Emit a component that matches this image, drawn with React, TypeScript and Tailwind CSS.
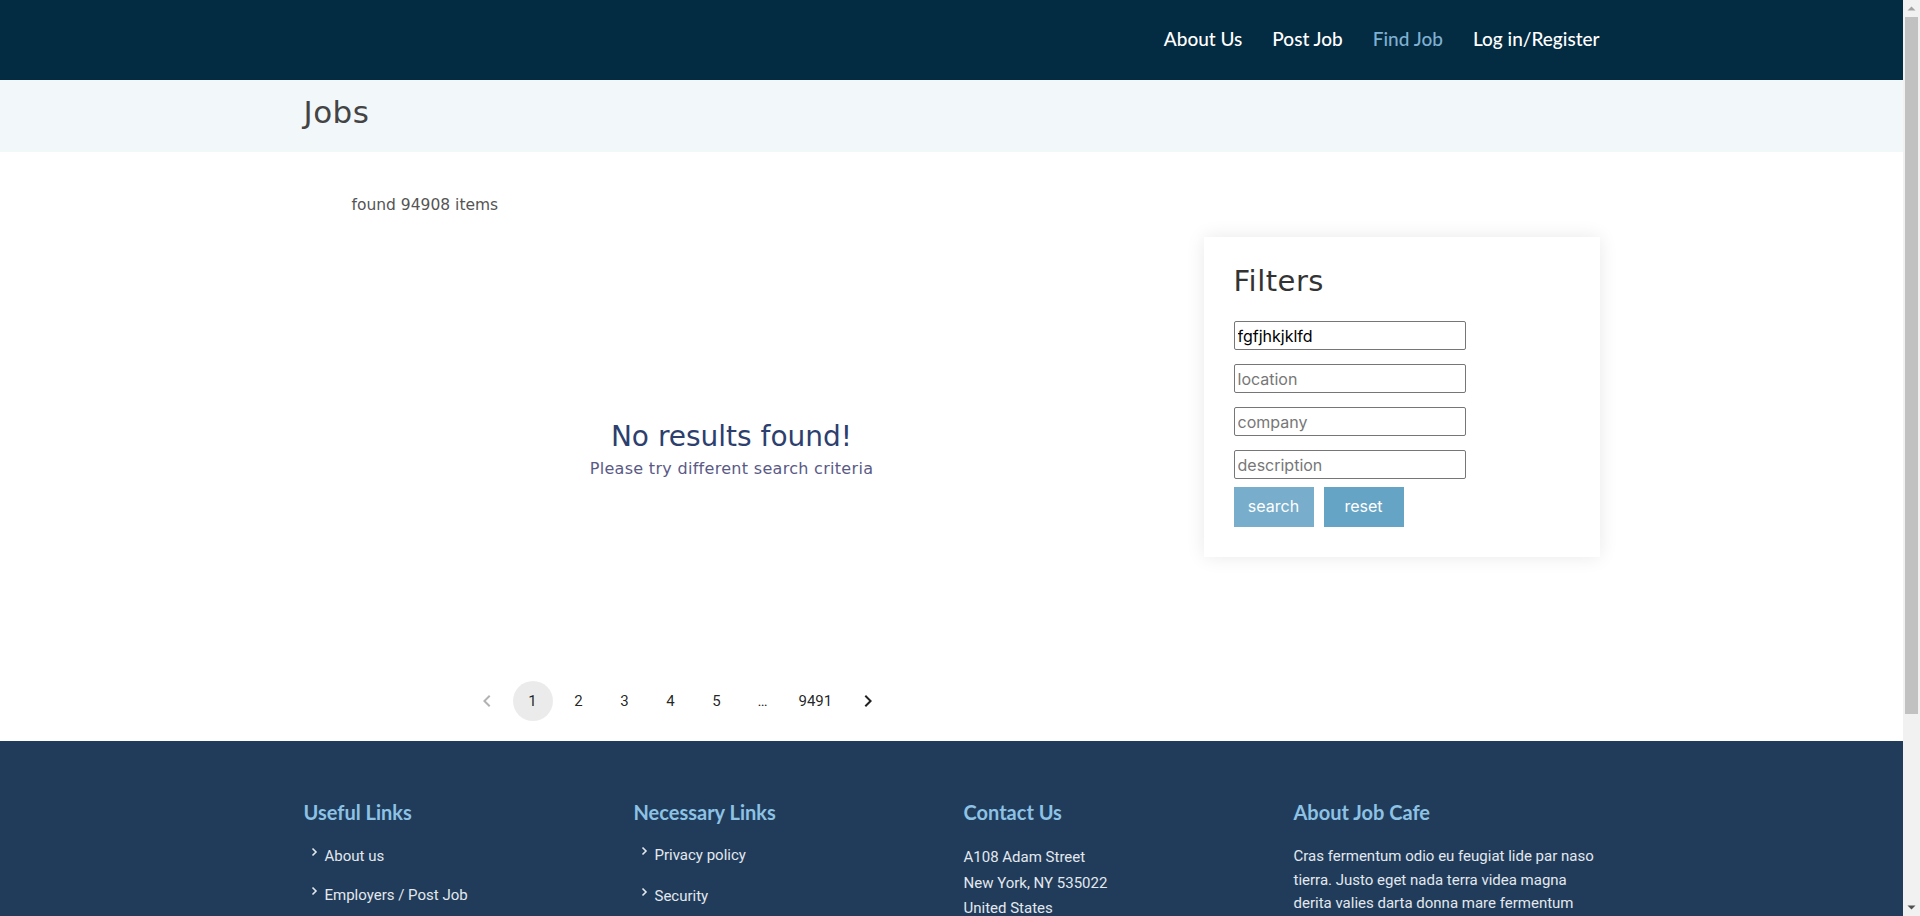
import React from "react";

const Chevron = () => (
  <svg width="7" height="10" viewBox="0 0 7 10" className="mr-[7px] -mt-[8px] shrink-0" fill="none">
    <path d="M1.5 1.5 L5 5 L1.5 8.5" stroke="#e3e8ee" strokeWidth="1.6" />
  </svg>
);

const PrevIcon = ({ color }: { color: string }) => (
  <svg width="24" height="24" viewBox="0 0 24 24">
    <path d="M15.41 7.41 14 6l-6 6 6 6 1.41-1.41L10.83 12z" fill={color} />
  </svg>
);
const NextIcon = ({ color }: { color: string }) => (
  <svg width="24" height="24" viewBox="0 0 24 24">
    <path d="M10 6 8.59 7.41 13.17 12l-4.58 4.59L10 18l6-6z" fill={color} />
  </svg>
);

const Scrollbar = () => (
  <div className="flex h-[916px] w-[17px] shrink-0 flex-col bg-[#f1f1f1]">
    <div className="flex h-[17px] items-center justify-center">
      <svg width="9" height="5" viewBox="0 0 9 5">
        <path d="M0.5 4.5 L4.5 0.5 L8.5 4.5 Z" fill="#a3a3a3" />
      </svg>
    </div>
    <div className="mx-[2px] h-[697px] bg-[#c1c1c1]" />
    <div className="flex-1" />
    <div className="flex h-[17px] items-center justify-center">
      <svg width="9" height="5" viewBox="0 0 9 5">
        <path d="M0.5 0.5 L4.5 4.5 L8.5 0.5 Z" fill="#505050" />
      </svg>
    </div>
  </div>
);

export default function App() {
  const rounded = { fontFamily: '"DejaVu Sans", sans-serif' };
  const nav = { fontFamily: 'Lato, "Noto Sans", sans-serif' };
  const inter = { fontFamily: 'Inter, "Noto Sans", sans-serif' };
  const roboto = { fontFamily: 'Roboto, "Noto Sans", sans-serif' };

  return (
    <div className="flex h-[916px] w-[1920px] overflow-hidden bg-white">
      <div className="h-[916px] w-[1903px] shrink-0 overflow-hidden">
        {/* Header */}
        <header className="h-[80px] bg-[#032b41]">
          <div className="mx-auto flex h-full w-[1320px] items-center justify-end px-3">
            <nav className="flex items-center gap-[30px] pb-[2px] text-[19px] font-medium text-white" style={nav}>
              <a>About Us</a>
              <a>Post Job</a>
              <a className="text-[#7fb0d2]">Find Job</a>
              <a>Log in/Register</a>
            </nav>
          </div>
        </header>

        {/* Title band */}
        <div className="h-[72px] bg-[#f2f7fa]">
          <div className="mx-auto flex h-full w-[1320px] items-center px-3">
            <h1 className="-mt-[7px] text-[31px] font-normal tracking-[0.5px] text-[#444]" style={rounded}>
              Jobs
            </h1>
          </div>
        </div>

        {/* Main */}
        <main className="mx-auto w-[1320px]">
          <div className="flex h-[529px]">
            <div className="w-[880px] px-3">
              <p className="pl-[48px] pt-[41px] text-[15.5px] leading-[24px] text-[#555]" style={rounded}>
                found 94908 items
              </p>
              <div className="mt-[202px] flex flex-col items-center">
                <h2 className="text-[28px] leading-[36px] text-[#2d3f6e]" style={rounded}>
                  No results found!
                </h2>
                <p className="mt-[3px] text-[16px] leading-[22px] tracking-[0.3px] text-[#5a5a86]" style={rounded}>
                  Please try different search criteria
                </p>
              </div>
            </div>
            <div className="w-[440px] px-3">
              <div className="ml-[20px] mt-[85px] bg-white px-[30px] pb-[30px] pt-[24px] shadow-[0_0_18px_rgba(0,0,0,0.09)]">
                <h3 className="text-[29px] leading-[40px] tracking-[0.5px] text-[#333]" style={rounded}>
                  Filters
                </h3>
                <div className="mt-[20px] flex flex-col gap-[14px]" style={inter}>
                  <input
                    defaultValue="fgfjhkjklfd"
                    className="h-[29px] w-[232px] rounded-[2px] border border-[#767676] px-[3px] text-[16px] text-black outline-none"
                  />
                  <input
                    placeholder="location"
                    className="h-[29px] w-[232px] rounded-[2px] border border-[#767676] px-[3px] text-[16px] text-black outline-none placeholder:text-[#777]"
                  />
                  <input
                    placeholder="company"
                    className="h-[29px] w-[232px] rounded-[2px] border border-[#767676] px-[3px] text-[16px] text-black outline-none placeholder:text-[#777]"
                  />
                  <input
                    placeholder="description"
                    className="h-[29px] w-[232px] rounded-[2px] border border-[#767676] px-[3px] text-[16px] text-black outline-none placeholder:text-[#777]"
                  />
                </div>
                <div className="mt-[8px] flex gap-[10px]" style={inter}>
                  <button className="h-[40px] w-[80px] bg-[#78adcb] pb-[2px] text-[16px] text-white">search</button>
                  <button className="h-[40px] w-[80px] bg-[#66a4c6] pb-[2px] text-[16px] text-white">reset</button>
                </div>
              </div>
            </div>
          </div>

          {/* Pagination */}
          <div className="px-3 pb-[20px]">
            <ul className="ml-[163px] flex items-center gap-[6px] text-[15px] text-[rgba(0,0,0,0.87)]" style={roboto}>
              <li className="flex h-[40px] w-[40px] items-center justify-center">
                <PrevIcon color="rgba(0,0,0,0.3)" />
              </li>
              <li className="flex h-[40px] w-[40px] items-center justify-center rounded-full bg-[rgba(0,0,0,0.08)]">1</li>
              <li className="flex h-[40px] w-[40px] items-center justify-center">2</li>
              <li className="flex h-[40px] w-[40px] items-center justify-center">3</li>
              <li className="flex h-[40px] w-[40px] items-center justify-center">4</li>
              <li className="flex h-[40px] w-[40px] items-center justify-center">5</li>
              <li className="flex h-[40px] w-[40px] items-center justify-center">…</li>
              <li className="flex h-[40px] min-w-[40px] items-center justify-center px-[10px]">9491</li>
              <li className="flex h-[40px] w-[40px] items-center justify-center">
                <NextIcon color="rgba(0,0,0,0.87)" />
              </li>
            </ul>
          </div>
        </main>

        {/* Footer */}
        <footer className="h-[420px] bg-[#203c5a]">
          <div className="mx-auto flex w-[1320px] pt-[57px]">
            <div className="w-[330px] px-3">
              <h4 className="text-[20px] font-bold leading-[28px] text-[#8dc2e5]" style={nav}>Useful Links</h4>
              <ul className="mt-[18px] flex flex-col gap-[15px] pl-[7px] text-[15px] leading-[24px] text-[#e3e8ee]" style={roboto}>
                <li className="flex items-center"><Chevron />About us</li>
                <li className="flex items-center"><Chevron />Employers / Post Job</li>
              </ul>
            </div>
            <div className="w-[330px] px-3">
              <h4 className="text-[20px] font-bold leading-[28px] text-[#8dc2e5]" style={nav}>Necessary Links</h4>
              <ul className="mt-[17px] flex flex-col gap-[17px] pl-[7px] text-[15px] leading-[24px] text-[#e3e8ee]" style={roboto}>
                <li className="flex items-center"><Chevron />Privacy policy</li>
                <li className="flex items-center"><Chevron />Security</li>
              </ul>
            </div>
            <div className="w-[330px] px-3">
              <h4 className="text-[20px] font-bold leading-[28px] text-[#8dc2e5]" style={nav}>Contact Us</h4>
              <div className="mt-[19px] text-[15px] leading-[25.5px] text-[#e3e8ee]" style={roboto}>
                <p>A108 Adam Street</p>
                <p>New York, NY 535022</p>
                <p>United States</p>
              </div>
            </div>
            <div className="w-[330px] px-3">
              <h4 className="text-[20px] font-bold leading-[28px] text-[#8dc2e5]" style={nav}>About Job Cafe</h4>
              <p className="mt-[19px] w-[304px] text-[15px] leading-[23.5px] text-[#e3e8ee]" style={roboto}>
                Cras fermentum odio eu feugiat lide par naso tierra. Justo eget nada terra videa magna derita valies darta donna mare fermentum iaculis eu non diam phasellus.
              </p>
            </div>
          </div>
        </footer>
      </div>
      <Scrollbar />
    </div>
  );
}
